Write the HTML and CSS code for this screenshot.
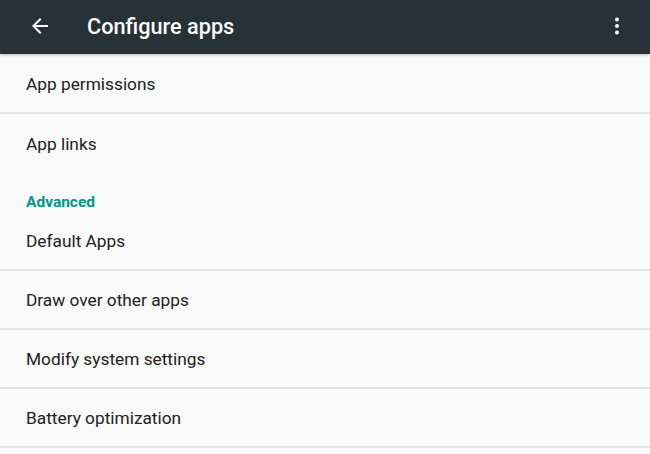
FILE: index.html
```html
<!DOCTYPE html>
<html>
<head>
<meta charset="utf-8">
<link rel="stylesheet" href="styles.css">
</head>
<body>
<header class="toolbar">
  <svg class="icon back" viewBox="0 0 24 24" width="24" height="24"><path d="M20 11H7.83l5.59-5.59L12 4l-8 8 8 8 1.41-1.41L7.83 13H20v-2z" fill="#fff"/></svg>
  <h1 class="title">Configure apps</h1>
  <svg class="icon more" viewBox="0 0 24 24" width="24" height="24"><circle cx="12" cy="5.5" r="2" fill="#fff"/><circle cx="12" cy="12" r="2" fill="#fff"/><circle cx="12" cy="18.5" r="2" fill="#fff"/></svg>
</header>
<main class="list">
  <div class="item">App permissions</div>
  <div class="item no-div">App links</div>
  <div class="category">Advanced</div>
  <div class="item">Default Apps</div>
  <div class="item">Draw over other apps</div>
  <div class="item">Modify system settings</div>
  <div class="item">Battery optimization</div>
</main>
</body>
</html>
```
FILE: styles.css
```css
* { box-sizing: border-box; }
html, body { margin: 0; padding: 0; }
body {
  width: 650px;
  height: 454px;
  overflow: hidden;
  background: #fafafa;
  font-family: Roboto, "Noto Sans", sans-serif;
}
.toolbar {
  position: relative;
  z-index: 1;
  height: 54px;
  background: #263238;
  display: flex;
  align-items: center;
  padding: 0 21px 0 28px;
  box-shadow: 0 1px 3px rgba(0,0,0,0.25);
}
.icon { flex: none; display: block; }
.back { margin-top: -2px; }
.title {
  flex: 1;
  margin: -2px 0 0 35px;
  color: #fff;
  font-size: 21.7px;
  font-weight: 500;
}
.more { margin-top: -2px; }
.list {
  display: flex;
  flex-direction: column;
  padding-top: 1px;
}
.item {
  height: 59px;
  display: flex;
  align-items: center;
  padding: 1px 26px 0;
  font-size: 17.3px;
  color: #212121;
  border-bottom: 2px solid #e3e3e3;
}
.item.no-div { border-bottom: none; }
.category {
  height: 39px;
  display: flex;
  align-items: flex-end;
  padding: 0 26px 1px;
  font-size: 15.5px;
  font-weight: 700;
  color: #009688;
}
```
